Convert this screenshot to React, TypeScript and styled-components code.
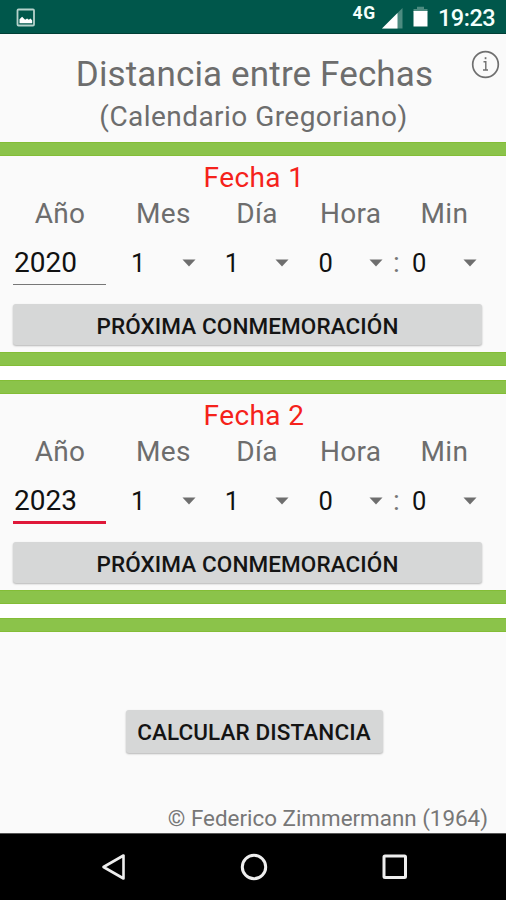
import React from "react";
import styled, { createGlobalStyle } from "styled-components";

const GlobalStyle = createGlobalStyle`
  * { box-sizing: border-box; }
  body { margin: 0; background: #fafafa; }
`;

const Screen = styled.div`
  width: 506px;
  height: 900px;
  overflow: hidden;
  display: flex;
  flex-direction: column;
  background: #fafafa;
  color: #6d6d6d;
  font-family: Roboto, "Liberation Sans", sans-serif;
`;

const StatusBar = styled.header`
  height: 34px;
  flex: none;
  display: flex;
  align-items: flex-start;
  padding: 0 10px 0 16px;
  background: #00574b;
  border-bottom: 1px solid #003f35;
`;

const PictureIcon = styled.svg`
  margin: 8px auto 0 0;
`;

const Network = styled.span`
  font-size: 17.5px;
  font-weight: 700;
  line-height: 20px;
  letter-spacing: 0.8px;
  margin-top: 3px;
  color: #f4fffc;
`;

const SignalIcon = styled.svg`
  margin: 8px 0 0 6px;
`;

const BatteryIcon = styled.svg`
  margin: 6px 0 0 10px;
`;

const Clock = styled.span`
  width: 58px;
  margin: 3px 0 0 10px;
  font-size: 23.5px;
  font-weight: 500;
  line-height: 30px;
  letter-spacing: -0.5px;
  white-space: nowrap;
  color: #f4fffc;
`;

const Heading = styled.section`
  height: 108px;
  flex: none;
  position: relative;
  padding-top: 20px;
  text-align: center;
`;

const Title = styled.h1`
  margin: 0 0 0 3px;
  font-size: 35px;
  font-weight: 400;
  line-height: 41px;
  letter-spacing: 0.14px;
`;

const Subtitle = styled.p`
  margin: 0 0 0 1px;
  font-size: 28px;
  line-height: 43px;
  letter-spacing: 0.45px;
`;

const InfoButton = styled.button`
  position: absolute;
  top: 16px;
  right: 6px;
  width: 29px;
  height: 29px;
  padding: 0;
  border: 0;
  background: none;
`;

const GreenBar = styled.div`
  height: 14px;
  flex: none;
  background: #8bc34a;
  border: solid #83bd36;
  border-width: 1px 0;
`;

const Gap = styled.div`
  height: 14px;
  flex: none;
  background: #fff;
`;

const DateSection = styled.section`
  height: 196px;
  flex: none;
  padding-top: 4px;
`;

const DateTitle = styled.h2`
  margin: 0 0 0 2px;
  font-size: 28px;
  font-weight: 400;
  line-height: 36px;
  letter-spacing: 0.4px;
  text-align: center;
  color: #f5221b;
`;

const FieldRow = styled.div`
  display: flex;
`;

const YearColumn = styled.div`
  width: 93px;
  margin: 0 10px 0 13px;
`;

const Column = styled.div`
  width: 93.7px;
  position: relative;
`;

const Label = styled.div`
  padding-left: 1px;
  font-size: 28px;
  line-height: 35px;
  letter-spacing: 0.3px;
  text-align: center;
`;

const YearInput = styled.div<{ $active: boolean }>`
  height: ${(p) => (p.$active ? 55 : 54)}px;
  padding: 14px 0 0 1px;
  font-size: 28px;
  line-height: 36px;
  color: #111;
  border-bottom: ${(p) => (p.$active ? "3px solid #df1839" : "1px solid #777")};
`;

const Spinner = styled.div`
  height: 64px;
  display: flex;
  align-items: center;
  justify-content: space-between;
  padding: 0 14px 0 15px;
  font-size: 25.5px;
  line-height: 36px;
  color: #111;
`;

const Colon = styled.span`
  position: absolute;
  left: -4px;
  top: 49px;
  font-size: 28px;
  line-height: 36px;
  color: #777;
`;

const Button = styled.button<{ $wide?: boolean }>`
  display: block;
  width: ${(p) => (p.$wide ? "469px" : "257px")};
  height: ${(p) => (p.$wide ? "41px" : "43px")};
  margin: ${(p) => (p.$wide ? "9px 0 0 13px" : "78px 0 0 125.5px")};
  padding: ${(p) => (p.$wide ? "3px 0 0" : "0")};
  border: 0;
  border-radius: 3px;
  background: #d6d7d7;
  box-shadow: 0 1px 2px rgba(0, 0, 0, 0.28);
  font-family: inherit;
  font-size: 22.5px;
  font-weight: 500;
  line-height: 28px;
  letter-spacing: 0.1px;
  white-space: nowrap;
  text-align: center;
  color: #141414;
`;

const Actions = styled.main`
  flex: 1;
  display: flex;
  flex-direction: column;
`;

const Credit = styled.footer`
  margin: auto 18px 0 0;
  font-size: 22.4px;
  line-height: 29px;
  text-align: right;
  color: #777;
`;

const NavBar = styled.nav`
  height: 67px;
  flex: none;
  display: flex;
  justify-content: space-between;
  padding: 18px 96px 0 99px;
  border-top: 1px solid #555;
  background: #000;
`;

const Caret = () => (
  <svg width="14" height="8" viewBox="0 0 14 8">
    <path d="M.5.5h13L7 7.5z" fill="#6e6e6e" />
  </svg>
);

const units = ["Mes", "Día", "Hora", "Min"];

function DateBlock({ title, year, values, active = false }: {
  title: string;
  year: string;
  values: number[];
  active?: boolean;
}) {
  return (
    <DateSection>
      <DateTitle>{title}</DateTitle>
      <FieldRow>
        <YearColumn>
          <Label>Año</Label>
          <YearInput $active={active}>{year}</YearInput>
        </YearColumn>
        {units.map((unit, i) => (
          <Column key={unit}>
            <Label>{unit}</Label>
            {unit === "Min" && <Colon>:</Colon>}
            <Spinner>
              <span>{values[i]}</span>
              <Caret />
            </Spinner>
          </Column>
        ))}
      </FieldRow>
      <Button $wide>PRÓXIMA CONMEMORACIÓN</Button>
    </DateSection>
  );
}

export default function App() {
  return (
    <Screen>
      <GlobalStyle />
      <StatusBar>
        <PictureIcon width="20" height="20" viewBox="0 0 20 20">
          <rect x="1.5" y="1.5" width="16.5" height="16" rx="1" fill="none" stroke="#b5d2cb" strokeWidth="1.8" />
          <path d="M3.5 15.2v-4l2.6-2.4 3 3 2-1.2 1.7 1.1 1.8-1.3 1.6 2v2.8z" fill="#fff" />
        </PictureIcon>
        <Network>4G</Network>
        <SignalIcon width="21" height="21" viewBox="0 0 21 21">
          <path d="M0 20.5 20.5 0v20.5z" fill="#4d8b80" />
          <path d="M0 20.5 15.5 5v15.5z" fill="#fff" />
        </SignalIcon>
        <BatteryIcon width="15" height="21" viewBox="0 0 15 21">
          <path d="M.5 3H4V.8h7V3h3.5v3H.5z" fill="#4d8b80" />
          <path d="M.5 5h14v15.5H.5z" fill="#fff" />
        </BatteryIcon>
        <Clock>19:23</Clock>
      </StatusBar>

      <Heading>
        <Title>Distancia entre Fechas</Title>
        <Subtitle>(Calendario Gregoriano)</Subtitle>
        <InfoButton aria-label="Info">
          <svg width="29" height="29" viewBox="0 0 29 29" fill="none" stroke="#6f6f6f">
            <circle cx="14.5" cy="14.5" r="12.8" strokeWidth="1.7" />
            <path d="M12.5 11.8h2.3v8M12 20h5" strokeWidth="1.4" />
            <path d="M13.7 8.2h1.7" strokeWidth="2" />
          </svg>
        </InfoButton>
      </Heading>

      <GreenBar />
      <DateBlock title="Fecha 1" year="2020" values={[1, 1, 0, 0]} />
      <GreenBar />
      <Gap />
      <GreenBar />
      <DateBlock title="Fecha 2" year="2023" values={[1, 1, 0, 0]} active />
      <GreenBar />
      <Gap />
      <GreenBar />

      <Actions>
        <Button>CALCULAR DISTANCIA</Button>
        <Credit>© Federico Zimmermann (1964)</Credit>
      </Actions>

      <NavBar>
        <svg width="28" height="30" viewBox="0 0 28 30">
          <path d="M4.5 15 24.5 3.5v23z" fill="none" stroke="#eee" strokeWidth="2.6" strokeLinejoin="round" />
        </svg>
        <svg width="30" height="30" viewBox="0 0 30 30">
          <circle cx="15" cy="15" r="11.7" fill="none" stroke="#eee" strokeWidth="3" />
        </svg>
        <svg width="30" height="30" viewBox="0 0 30 30">
          <rect x="4" y="4" width="21.5" height="21.5" rx="1" fill="none" stroke="#eee" strokeWidth="3" />
        </svg>
      </NavBar>
    </Screen>
  );
}
